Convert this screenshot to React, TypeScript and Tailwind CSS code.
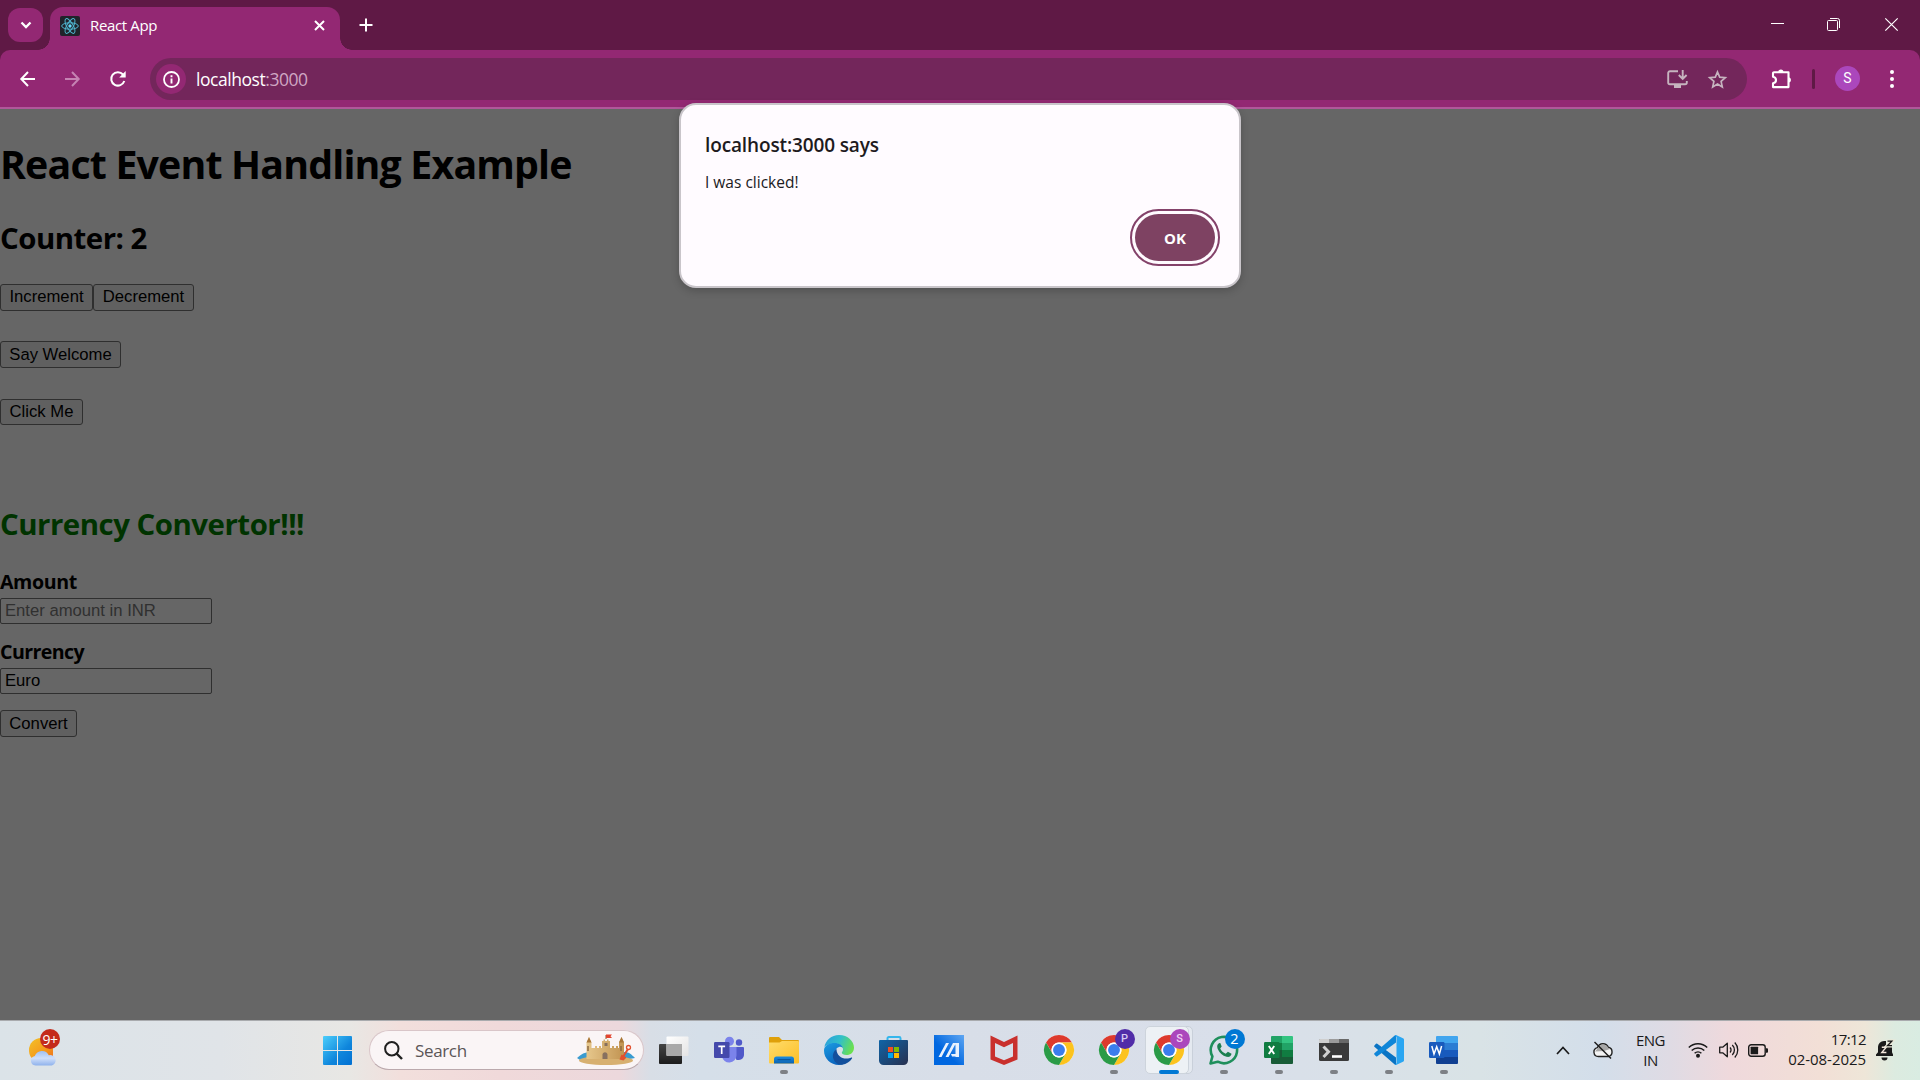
import type { ReactNode } from 'react';

function Svg({ w = 30, h = 30, box, children }: { w?: number; h?: number; box?: string; children: ReactNode }) {
  return (
    <svg width={w} height={h} viewBox={box ?? `0 0 ${w} ${h}`} fill="none" className="block shrink-0 overflow-visible">
      {children}
    </svg>
  );
}

function ReactLogo() {
  return (
    <div className="flex size-5 items-center justify-center rounded-[2px] bg-[#20232a]">
      <Svg w={18} h={18} box="-9 -9 18 18">
        <g stroke="#4fb6cf" strokeWidth="1">
          <ellipse rx="8.3" ry="3.2" />
          <ellipse rx="8.3" ry="3.2" transform="rotate(60)" />
          <ellipse rx="8.3" ry="3.2" transform="rotate(120)" />
        </g>
        <circle r="1.7" fill="#61dafb" />
      </Svg>
    </div>
  );
}

function TabStrip() {
  return (
    <div className="flex h-[50px] items-start bg-[#5f1945]">
      <div className="mt-2 ml-2 flex h-[34px] w-[35px] items-center justify-center rounded-[12px] bg-[#932873]">
        <Svg w={12} h={8}>
          <path d="M1.500 1.500 6 6l4.500-4.500" stroke="#fff" strokeWidth="2.300" />
        </Svg>
      </div>
      <div className="relative mt-[7px] ml-[7px] flex h-[43px] w-[290px] items-center rounded-t-[13px] bg-[#932873] pb-[6px]">
        <div className="absolute bottom-0 -left-3 size-3 bg-[radial-gradient(circle_at_0_0,transparent_11.500px,#932873_12px)]" />
        <div className="absolute -right-3 bottom-0 size-3 bg-[radial-gradient(circle_at_100%_0,transparent_11.500px,#932873_12px)]" />
        <div className="mt-px ml-[10px]">
          <ReactLogo />
        </div>
        <span className="ml-[10px] flex-1 pb-px text-[15px] leading-5 tracking-[-0.35px] text-white">React App</span>
        <div className="mr-[15px] pb-px">
          <Svg w={11} h={11}>
            <path d="m1 1 9 9M10 1l-9 9" stroke="#fff" strokeWidth="2" />
          </Svg>
        </div>
      </div>
      <div className="mt-[18px] ml-[19px]">
        <Svg w={14} h={14}>
          <path d="M7 .5v13M.5 7h13" stroke="#fff" strokeWidth="2" />
        </Svg>
      </div>
      <div className="ml-auto flex h-[49px] items-center pr-[22px]">
        <Svg w={13} h={13}>
          <path d="M0 5.500h13" stroke="#fff" />
        </Svg>
        <div className="ml-[43px]">
          <Svg w={13} h={13}>
            <rect x=".5" y="2.500" width="10" height="10" rx="1" stroke="#fff" />
            <path d="M3 .5h7.500a2 2 0 0 1 2 2V10" stroke="#fff" />
          </Svg>
        </div>
        <div className="ml-[45px]">
          <Svg w={13} h={13}>
            <path d="m.3.300 12.400 12.400M12.700.3.300 12.700" stroke="#fff" strokeWidth="1.200" />
          </Svg>
        </div>
      </div>
    </div>
  );
}

function Toolbar() {
  return (
    <div className="bg-[#5f1945]">
      <div className="flex h-[59px] items-start rounded-t-[10px] border-b-2 border-[#b0589a] bg-[#932873] pt-2">
        <div className="flex h-[42px] w-[150px] items-center pb-px pl-5">
          <Svg w={15} h={16}>
            <path d="M15 8H1.500M8 1 1.300 8 8 15" stroke="#fff" strokeWidth="2" />
          </Svg>
          <div className="ml-[30px]">
            <Svg w={15} h={16}>
              <path d="M0 8h13.500M7 1l6.700 7L7 15" stroke="#c583b3" strokeWidth="2" />
            </Svg>
          </div>
          <div className="ml-[30px]">
            <Svg w={16} h={16}>
              <path d="M14.300 10A6.700 6.700 0 1 1 13 3.500l1.500 1.500" stroke="#fff" strokeWidth="2" />
              <path d="M15.700 0v6.500H9.200z" fill="#fff" />
            </Svg>
          </div>
        </div>
        <div className="flex h-[42px] w-[1597px] items-center rounded-full bg-[#73265b] pl-[6px]">
          <div className="flex size-[30px] items-center justify-center rounded-full bg-[#932873]">
            <Svg w={17} h={17}>
              <circle cx="8.500" cy="8.500" r="7.500" stroke="#fff" strokeWidth="1.800" />
              <path d="M8.500 7.500v5M8.500 4.300v2" stroke="#fff" strokeWidth="1.900" />
            </Svg>
          </div>
          <span className="ml-[10px] text-[17.5px] leading-6 tracking-[-0.45px] text-white">
            localhost<span className="text-[#cfa6c3]">:3000</span>
          </span>
          <div className="mr-[20px] ml-auto flex items-center gap-[20px]">
            <Svg w={21} h={18}>
              <path d="M11 1.200H3A1.800 1.800 0 0 0 1.200 3v9.500A1.800 1.800 0 0 0 3 14.300h15a1.800 1.800 0 0 0 1.800-1.800V11" stroke="#c6b4bf" strokeWidth="1.900" />
              <path d="M7 14h7v4H7z" fill="#c6b4bf" />
              <path d="M15.700 0v8.500M11.800 5l3.900 4 3.900-4" stroke="#c6b4bf" strokeWidth="1.900" />
            </Svg>
            <Svg w={19} h={19}>
              <path d="m9.500 2 2.200 5.200 5.600.5-4.200 3.700 1.200 5.500-4.800-2.900-4.800 2.900 1.200-5.500L1.700 7.700l5.600-.5z" stroke="#c6b4bf" strokeWidth="1.700" />
            </Svg>
          </div>
        </div>
        <div className="flex h-[42px] items-center pb-px pl-6">
          <Svg w={21} h={20}>
            <path d="M3 3.300h14.500v14.800H2V14.300c4-.6 4-6 0-6.600V4.300a1 1 0 0 1 1-1z" stroke="#fff" strokeWidth="2.100" strokeLinejoin="round" />
            <path d="M7.300 3a2.600 2.600 0 0 1 5.200 0zM18 8.300a2.700 2.700 0 0 1 0 5.200z" fill="#fff" />
          </Svg>
          <div className="ml-5 h-5 w-[3px] rounded bg-[#5f1945]" />
          <div className="ml-5 flex size-[25px] items-center justify-center rounded-full bg-[#ab47bc] font-[Roboto] text-[14px] text-white">S</div>
          <div className="ml-[30px]">
            <Svg w={4} h={18}>
              <circle cx="2" cy="2" r="2" fill="#fff" />
              <circle cx="2" cy="9" r="2" fill="#fff" />
              <circle cx="2" cy="16" r="2" fill="#fff" />
            </Svg>
          </div>
        </div>
      </div>
    </div>
  );
}

function PageButton({ className, children }: { className: string; children: ReactNode }) {
  return (
    <button
      className={`flex items-center justify-center rounded-[3px] border border-[#2f2f2f] bg-[#606060] font-['Liberation_Sans',sans-serif] text-[16.67px] leading-5 whitespace-nowrap text-black ${className}`}
    >
      {children}
    </button>
  );
}

function Page() {
  return (
    <div className="flex flex-1 flex-col items-start bg-[#666666] text-black">
      <h1 className="mt-7 text-[39.3px] leading-[54px] font-bold tracking-[-0.83px]">React Event Handling Example</h1>
      <h2 className="mt-[27px] text-[29.4px] leading-10 font-bold tracking-[-0.5px]">Counter: 2</h2>
      <div className="mt-[26px] flex">
        <PageButton className="h-[27px] w-[93px] pb-[2px]">Increment</PageButton>
        <PageButton className="h-[27px] w-[101px] pb-[2px]">Decrement</PageButton>
      </div>
      <PageButton className="mt-[30px] h-[27px] w-[121px]">Say Welcome</PageButton>
      <PageButton className="mt-[31px] h-[26px] w-[83px]">Click Me</PageButton>
      <h2 className="mt-[79px] text-[29.4px] leading-10 font-bold tracking-[-0.48px] text-[#003300]">Currency Convertor!!!</h2>
      <label className="mt-[25px] text-[19.6px] leading-[26px] font-bold tracking-[-0.4px]">Amount</label>
      <input
        placeholder="Enter amount in INR"
        className="mt-[3px] h-[26px] w-[212px] rounded-[2px] border border-[#2f2f2f] bg-[#666666] pb-px pl-1 font-['Liberation_Sans',sans-serif] text-[16.67px] placeholder:text-[#303030]"
      />
      <label className="mt-[15px] text-[19.6px] leading-[26px] font-bold tracking-[-0.6px]">Currency</label>
      <input
        defaultValue="Euro"
        className="mt-[3px] h-[26px] w-[212px] rounded-[2px] border border-[#2f2f2f] bg-[#666666] pb-px pl-1 font-['Liberation_Sans',sans-serif] text-[16.67px]"
      />
      <PageButton className="mt-4 h-[27px] w-[77px]">Convert</PageButton>
    </div>
  );
}

function AlertDialog() {
  return (
    <div className="absolute top-[103px] left-[679px] flex h-[185px] w-[562px] flex-col rounded-[17px] border-2 border-[#c9c5ca] bg-[#fffbff] pl-6 text-[#201a1d] shadow-[0_3px_8px_rgba(0,0,0,0.2)]">
      <div className="mt-[27px] text-[19px] leading-[26px] font-semibold tracking-[-0.13px]">localhost:3000 says</div>
      <div className="mt-[14px] text-[15.500px] leading-5">I was clicked!</div>
      <button className="mt-[17px] mr-[19px] flex h-[57px] w-[90px] items-center justify-center self-end rounded-[29px] border-2 border-[#84426a] p-[3px]">
        <span className="flex h-full w-full items-center justify-center rounded-[24px] bg-[#7e4262] pt-px text-[15px] font-bold text-white">OK</span>
      </button>
    </div>
  );
}

function Weather() {
  return (
    <div className="relative">
      <Svg w={27} h={28}>
        <defs>
          <linearGradient id="sun" x1="0" y1="0" x2="1" y2="1">
            <stop stopColor="#f2c229" />
            <stop offset=".6" stopColor="#f59a1c" />
            <stop offset="1" stopColor="#ec6f1c" />
          </linearGradient>
          <linearGradient id="cloud" x1="0" y1="0" x2="0" y2="1">
            <stop stopColor="#9fc0f2" />
            <stop offset=".5" stopColor="#cfdffa" />
            <stop offset="1" stopColor="#8fb2ec" />
          </linearGradient>
        </defs>
        <path d="M12 0A12 12 0 0 0 0 12c0 5 2 8 5 10h19V12A12 12 0 0 0 12 0z" fill="url(#sun)" />
        <path d="M6.500 27.500a4.800 4.800 0 0 1-.7-9.500 7.600 7.600 0 0 1 14-.8 5.200 5.200 0 0 1 3 10.300z" fill="url(#cloud)" />
      </Svg>
      <div className="absolute -top-[9px] left-[11px] flex size-5 items-center justify-center rounded-full bg-[#c42b1c] text-[14px] tracking-[-0.5px] text-white">9+</div>
    </div>
  );
}

function Castle() {
  return (
    <Svg w={60} h={32}>
      <defs>
        <linearGradient id="sand" x1="0" y1="0" x2="1" y2="0">
          <stop stopColor="#e6c78c" />
          <stop offset="1" stopColor="#c29452" />
        </linearGradient>
      </defs>
      <path d="M1 24c4-4 8-6 13-6v8H4zM59 24c-4-4-6-6-11-6v8z" fill="#3a9bd0" />
      <ellipse cx="30" cy="26.500" rx="27" ry="4.500" fill="#d7b070" />
      <path d="M30 5V1" stroke="#8a5a2a" />
      <path d="M30 .5h6l-1.500 1.700L36 4h-6z" fill="#e2452f" />
      <path d="M10.500 8.500 13 3l2.500 5.500v5.500H19V12h2v2h2v-2h2v2h1V7h1.500V5.500h1.500V7h2V5.500h1.500V7H34v7h2v-2h2v2h2v-2h2v2h1V8.500L45.500 3 48 8.500V25H10.500z" fill="url(#sand)" />
      <path d="m10.500 8.500 2.500-5.500 2.500 5.500zM43 8.500 45.500 3 48 8.500z" fill="#a87638" />
      <path d="M26.500 25v-5a2.700 2.700 0 0 1 5 0v5zM28.500 9h3v3h-3z" fill="#87705f" />
      <path d="M12 12v5M45 12v5" stroke="#8d6a43" strokeWidth="1.500" />
      <path d="m47 23 5-8" stroke="#e2512f" strokeWidth="2" />
      <circle cx="52.500" cy="13.500" r="2" stroke="#e2512f" strokeWidth="1.300" />
      <path d="m43.500 25.500 2-5 5 3-3 3z" fill="#e2512f" />
    </Svg>
  );
}

function Chrome() {
  return (
    <Svg box="-24 -24 48 48">
      <circle r="24" fill="#fff" />
      <path d="M-20.785-12A24 24 0 0 1 20.785-12H0A12 12 0 0 0-10.392 6z" fill="#dd3a2d" />
      <path d="M20.785-12A24 24 0 0 1 0 24L10.392 6A12 12 0 0 0 0-12z" fill="#fcc31e" />
      <path d="M-20.785-12A24 24 0 0 0 0 24L10.392 6A12 12 0 0 1-10.392 6z" fill="#2a9b47" />
      <circle r="12" fill="#fff" />
      <circle r="9.500" fill="#3b7ded" />
    </Svg>
  );
}

function ChromeProfile({ letter, tone }: { letter: string; tone: string }) {
  return (
    <div className="relative">
      <Chrome />
      <div className={`absolute -top-[6px] left-[16px] flex size-5 items-center justify-center rounded-full font-[Roboto] text-[11px] font-medium ${tone}`}>{letter}</div>
    </div>
  );
}

function StartLogo() {
  return (
    <Svg w={29} h={29}>
      <defs>
        <linearGradient id="win" x1="0" y1="0" x2="29" y2="29" gradientUnits="userSpaceOnUse">
          <stop stopColor="#4ccefb" />
          <stop offset=".6" stopColor="#0f86dc" />
          <stop offset="1" stopColor="#0270d2" />
        </linearGradient>
      </defs>
      <path d="M1 0h13v14H0V1a1 1 0 0 1 1-1zM15 0h13a1 1 0 0 1 1 1v13H15zM0 15h14v14H1a1 1 0 0 1-1-1zM15 15h14v13a1 1 0 0 1-1 1H15z" fill="url(#win)" />
    </Svg>
  );
}

function TaskView() {
  return (
    <Svg>
      <defs>
        <linearGradient id="tv" x1="0" y1="0" x2="0" y2="1">
          <stop stopColor="#444" />
          <stop offset="1" stopColor="#1c1c1c" />
        </linearGradient>
        <linearGradient id="tv2" x1="0" y1="0" x2="1" y2="1">
          <stop stopColor="#fff" />
          <stop offset="1" stopColor="#e4e4e4" />
        </linearGradient>
      </defs>
      <rect x="0" y="9" width="23" height="20" rx="1" fill="url(#tv)" />
      <rect x="7.500" y="1.500" width="22" height="19.500" rx="1" fill="url(#tv2)" />
      <path d="M7.500 9H23v12H8.500a1 1 0 0 1-1-1z" fill="#a9a9a9" />
    </Svg>
  );
}

function Teams() {
  return (
    <Svg>
      <circle cx="25" cy="7.500" r="3.200" fill="#5059c9" />
      <path d="M20 12h9a1 1 0 0 1 1 1v6.500a5.500 5.500 0 0 1-8 5z" fill="#5059c9" />
      <circle cx="15.500" cy="6.200" r="4.500" fill="#7b83eb" />
      <path d="M8 12h14.500v8.500a7.300 7.300 0 0 1-14.500 1z" fill="#7b83eb" />
      <rect y="7" width="15.500" height="16" rx="1.200" fill="#4449ab" />
      <path d="M4.300 11.300h6.800M7.700 11.300v7.700" stroke="#fff" strokeWidth="1.700" />
    </Svg>
  );
}

function Explorer() {
  return (
    <Svg>
      <defs>
        <linearGradient id="fold" x1="0" y1="0" x2="1" y2="1">
          <stop stopColor="#ffdc6b" />
          <stop offset="1" stopColor="#fcbf27" />
        </linearGradient>
        <linearGradient id="foldb" x1="0" y1="0" x2="0" y2="1">
          <stop stopColor="#1a8ce0" />
          <stop offset="1" stopColor="#0c62b0" />
        </linearGradient>
      </defs>
      <path d="M1 2h9l3 3h16a1 1 0 0 1 1 1v4H0V3a1 1 0 0 1 1-1z" fill="#dfa00a" />
      <path d="M0 7.500h10.500L13 6h16a1 1 0 0 1 1 1v20.500a1 1 0 0 1-1 1H1a1 1 0 0 1-1-1z" fill="url(#fold)" />
      <path d="M5 28.500V24a2.500 2.500 0 0 1 2.500-2.500h15A2.500 2.500 0 0 1 25 24v4.500z" fill="url(#foldb)" />
      <path d="M8.500 24.700h13" stroke="#0a4f93" />
    </Svg>
  );
}

function Edge() {
  return (
    <Svg>
      <defs>
        <linearGradient id="e1" x1="0" y1=".2" x2="1" y2=".5">
          <stop stopColor="#2a9fdc" />
          <stop offset=".5" stopColor="#31bfca" />
          <stop offset="1" stopColor="#6be04f" />
        </linearGradient>
        <linearGradient id="e2" x1="0" y1="0" x2=".5" y2="1">
          <stop stopColor="#1b9de2" />
          <stop offset="1" stopColor="#0a63bd" />
        </linearGradient>
      </defs>
      <path d="M.3 12.500C1.500 5 7.500 0 15 0c9 0 15 6.500 15 12.500 0 5-3.500 7.500-7.500 7.500-3 0-4.700-1-4.700-2.200 0-.8 1.200-1.200 1.200-3.500 0-3-3-5.800-7.500-5.800C6 8.500 1.500 10 .3 12.500z" fill="url(#e1)" />
      <path d="M0 15.500C0 10.500 5 8 10.500 8c5 0 8 2.500 8.300 5-1-1-2.500-1.500-3.800-1-3 1-4.500 4-3.500 8 1.200 5 5 8 9.500 8.300A15 15 0 0 1 15 30C6.500 30 0 23.500 0 15.500z" fill="url(#e2)" />
      <path d="M12.500 14c-3 2.500-4.500 6-3 10 1.300 3.500 4.500 5.800 8.500 5.800 4.500-.8 8-3.300 10-6.300.4-.7-.2-1.200-.8-.9-1.200.6-2.500 1-4.700 1C17 23.600 12.500 20 12.500 14z" fill="#124f9c" />
    </Svg>
  );
}

function Store() {
  return (
    <Svg>
      <defs>
        <linearGradient id="st" x1="0" y1="0" x2="1" y2="1">
          <stop stopColor="#0f65a8" />
          <stop offset="1" stopColor="#28304f" />
        </linearGradient>
      </defs>
      <path d="M8.500 6V3.300A1.300 1.300 0 0 1 9.800 2h10.400a1.300 1.300 0 0 1 1.300 1.300V6" stroke="#35b6ec" strokeWidth="2" />
      <path d="M1 5h27a1 1 0 0 1 1 1v19.500A4.500 4.500 0 0 1 24.500 30h-20A4.500 4.500 0 0 1 0 25.500V6a1 1 0 0 1 1-1z" fill="url(#st)" />
      <path d="M9 12h5v5H9z" fill="#f25022" />
      <path d="M15 12h5v5h-5z" fill="#7fba00" />
      <path d="M9 18h5v5H9z" fill="#00a4ef" />
      <path d="M15 18h5v5h-5z" fill="#ffb900" />
    </Svg>
  );
}

function MyAsus() {
  return (
    <Svg>
      <defs>
        <linearGradient id="as" x1=".4" y1=".6" x2="1" y2="0">
          <stop stopColor="#0067e0" />
          <stop offset="1" stopColor="#5fa6f2" />
        </linearGradient>
      </defs>
      <path d="M0 0h30v30H0z" fill="url(#as)" />
      <path d="M4.500 22 12 8h3L7.500 22zM11.500 22 19 8h3L14.500 22zM21 8h4v14h-3.500V11z" fill="#e9f2fd" />
      <path d="M17 19h5v2.500h-4z" fill="#e9f2fd" />
    </Svg>
  );
}

function McAfee() {
  return (
    <Svg>
      <path d="M1.500.5 15 7 28.500.5v24L15 30 1.500 24.500zM6 8v13.500l9 3.800 9-3.800V8l-9 4.300z" fill="#c9302d" fillRule="evenodd" />
    </Svg>
  );
}

function WhatsApp() {
  return (
    <div className="relative">
      <Svg>
        <path d="M1.500 28.500 3.400 21.500A13.200 13.200 0 1 1 8.700 26.700z" stroke="#1f8f5c" strokeWidth="2.600" strokeLinejoin="round" />
        <path d="M10.500 8c-2.500 1-2.800 3.500-1.500 6.500 1.600 3.500 4.500 6.300 8.500 7.300 2.700.6 4.800-.5 5-3l-3.600-2-2.200 2c-2.500-1-4.300-2.700-5.500-5.200l1.500-2-1.400-3.600z" fill="#1b7f50" />
      </Svg>
      <div className="absolute -top-[6px] left-[16px] flex size-5 items-center justify-center rounded-full bg-[#0078d4] text-[14.500px] text-white">2</div>
    </div>
  );
}

function Excel() {
  return (
    <Svg>
      <path d="M7 2a1 1 0 0 1 1-1h10v7H7z" fill="#21a366" />
      <path d="M18 1h10a1 1 0 0 1 1 1v6H18z" fill="#33c481" />
      <path d="M7 8h11v7H7z" fill="#107c41" />
      <path d="M18 8h11v7H18z" fill="#21a366" />
      <path d="M7 15h22v7H7z" fill="#185c37" />
      <path d="M18 15h11v7H18z" fill="#107c41" />
      <path d="M7 22h22v6a1 1 0 0 1-1 1H8a1 1 0 0 1-1-1z" fill="#185c37" />
      <rect y="7" width="15.500" height="16" rx="1.200" fill="#107c41" />
      <path d="m4.800 11 5.400 8M10.200 11l-5.400 8" stroke="#fff" strokeWidth="1.900" />
    </Svg>
  );
}

function Terminal() {
  return (
    <Svg>
      <rect y="4" width="30" height="22" rx="1.500" fill="#3a3a3a" />
      <path d="M1 4h9v4H0V5a1 1 0 0 1 1-1z" fill="#cfcfcf" />
      <path d="M10 4h10v4H10z" fill="#9b9b9b" />
      <path d="M20 4h9a1 1 0 0 1 1 1v3H20z" fill="#686868" />
      <path d="m4.500 11.500 5 5.200-5 5.300" stroke="#cfcfcf" strokeWidth="3" />
      <path d="M13 21.500h10" stroke="#fff" strokeWidth="2.600" />
    </Svg>
  );
}

function VsCode() {
  return (
    <Svg>
      <path d="M.4 10.400 2 8.700a1 1 0 0 1 1.300 0L22 22.500V30a2 2 0 0 1-1.300-.6L.4 11.800a1 1 0 0 1 0-1.400z" fill="#0a74c4" />
      <path d="M.4 19.600 2 21.300a1 1 0 0 0 1.300 0L22 7.500V0a2 2 0 0 0-1.300.6L.4 18.200a1 1 0 0 0 0 1.400z" fill="#0f86d8" />
      <path d="M22 0 29 3.200a1.600 1.600 0 0 1 1 1.400v20.800a1.600 1.600 0 0 1-1 1.400L22 30a1.800 1.800 0 0 1-1-.8l1.500-1V2L21 .8z" fill="#2aa6f2" />
    </Svg>
  );
}

function Word() {
  return (
    <Svg>
      <path d="M7 8V2a1 1 0 0 1 1-1h20a1 1 0 0 1 1 1v6z" fill="#41a5ee" />
      <path d="M7 8h22v7H7z" fill="#2b7cd3" />
      <path d="M7 15h22v7H7z" fill="#185abd" />
      <path d="M7 22h22v6a1 1 0 0 1-1 1H8a1 1 0 0 1-1-1z" fill="#103f91" />
      <rect y="7" width="15.500" height="16" rx="1.200" fill="#185abd" />
      <path d="m2.800 11 2.200 8 2.700-7.300 2.700 7.300 2.200-8" stroke="#fff" strokeWidth="1.500" />
    </Svg>
  );
}

function Task({ running, active, children }: { running?: boolean; active?: boolean; children: ReactNode }) {
  return (
    <div className="relative flex h-[60px] w-[55px] items-center justify-center">
      {active && (
        <>
          <div className="absolute top-[6px] left-[8px] h-12 w-[44px] rounded-[5px] border border-[#c9d0da] bg-[#e4e9f0]" />
          <div className="absolute top-[6px] left-[3.500px] h-12 w-[44px] rounded-[5px] border border-[#cdd4dc] bg-[#edf1f5]" />
        </>
      )}
      <div className="relative">{children}</div>
      {running && <div className="absolute top-[50px] h-1 w-2 rounded-full bg-[#7d8085]" />}
      {active && <div className="absolute top-[50px] h-1 w-5 rounded-full bg-[#0078d4]" />}
    </div>
  );
}

function Tray() {
  return (
    <div className="ml-auto flex h-[60px] items-center pr-[26px] text-[#1a1a1a]">
      <Svg w={14} h={9}>
        <path d="m1 8 6-6.500L13 8" stroke="#1a1a1a" strokeWidth="1.700" />
      </Svg>
      <div className="ml-[23px]">
        <Svg w={20} h={17}>
          <path d="M5.500 14.500a4.500 4.500 0 0 1-1-8.900 5.800 5.800 0 0 1 10.800-.3 4.700 4.700 0 0 1 0 9.200z" fill="#f4f4f4" stroke="#222" strokeWidth="1.400" />
          <path d="M5 6a5.500 5.500 0 0 1 10-.5L17 7l-6 2-9 .5z" fill="#a8a8a8" />
          <path d="M1.500 0 18 16.500" stroke="#1a1a1a" strokeWidth="1.500" />
        </Svg>
      </div>
      <div className="ml-[20px] w-[35px] text-center text-[15px] leading-5 tracking-[-0.5px]">
        ENG
        <br />
        IN
      </div>
      <div className="ml-[20px]">
        <Svg w={20} h={16}>
          <path d="M.8 5.500a13 13 0 0 1 18.400 0M3.700 8.500a9 9 0 0 1 12.600 0M6.600 11.300a5 5 0 0 1 6.800 0" stroke="#1a1a1a" strokeWidth="1.500" />
          <circle cx="10" cy="13.700" r="2" fill="#1a1a1a" />
        </Svg>
      </div>
      <div className="ml-[11px]">
        <Svg w={20} h={18}>
          <path d="M.7 6.200h3l4.600-4v13.600l-4.600-4h-3z" stroke="#1a1a1a" strokeWidth="1.300" strokeLinejoin="round" />
          <path d="M11 6.500a3.500 3.500 0 0 1 0 5M13.300 4a7 7 0 0 1 0 10M15.800 1.500a11 11 0 0 1 0 15" stroke="#1a1a1a" strokeWidth="1.300" />
        </Svg>
      </div>
      <div className="ml-[9px]">
        <Svg w={20} h={13}>
          <rect x=".7" y=".8" width="16.500" height="11.400" rx="2.500" stroke="#1a1a1a" strokeWidth="1.400" />
          <rect x="2.600" y="2.800" width="7.500" height="7.400" rx=".5" fill="#1a1a1a" />
          <path d="M18 4.300h1a1 1 0 0 1 1 1v2.400a1 1 0 0 1-1 1h-1z" fill="#1a1a1a" />
        </Svg>
      </div>
      <div className="ml-[20px] w-[78px] pb-[2px] text-right text-[15px] leading-5 tracking-[-0.05px] whitespace-nowrap">
        <span className="tracking-[-0.6px]">17:12</span>
        <br />
        02-08-2025
      </div>
      <div className="ml-[10px] pr-px">
        <Svg w={17} h={20}>
          <path d="M0 16v-1.500l2-2.300V7a6 6 0 0 1 6-6h2v4h6v7.200l1 2.300V16z" fill="#1a1a1a" />
          <path d="M5.500 17.500h6a3 3 0 0 1-6 0z" fill="#1a1a1a" />
          <path d="M5.800 7.200h4.400l-4.400 5.300h4.600" stroke="#f3e6dc" strokeWidth="1.400" />
          <path d="M11.500 1.200h4.300l-4.300 4.500H16" stroke="#e9e7d8" strokeWidth="3.600" />
          <path d="M11.500 1.200h4.300l-4.300 4.500H16" stroke="#1a1a1a" strokeWidth="1.300" />
        </Svg>
      </div>
    </div>
  );
}

function Taskbar() {
  return (
    <div className="flex h-[60px] shrink-0 bg-[linear-gradient(90deg,#dbe3e8_0px,#e0e4e8_220px,#e8e7e4_350px,#f2dfdc_400px,#f0d9da_500px,#ecd8dc_620px,#d8dee6_650px,#d5dfe9_700px,#d8dee8_960px,#d9dfea_1240px,#d9e3e6_1480px,#d3deea_1600px,#dfdbe4_1670px,#efd9dc_1730px,#f2dfd6_1820px,#eee6d8_1865px,#dcebe0_1895px,#d9ece2_1920px)] shadow-[inset_0_1px_0_#a9abae]">
      <div className="w-[323px] pt-[18px] pl-[29px]">
        <Weather />
      </div>
      <div className="pt-4">
        <StartLogo />
      </div>
      <div className="mt-[10px] ml-[17px] flex h-10 w-[275px] items-center rounded-full border border-[#d9c6c9] border-b-[#bba9ad] bg-[#faf5f6]">
        <div className="ml-[14px]">
          <Svg w={19} h={19}>
            <circle cx="7.800" cy="7.800" r="6.700" stroke="#1f1f1f" strokeWidth="2" />
            <path d="m12.500 12.500 5.500 5.500" stroke="#1f1f1f" strokeWidth="2.400" />
          </Svg>
        </div>
        <span className="ml-[12px] flex-1 pt-[2px] text-[17px] tracking-[-0.35px] text-[#5a5557]">Search</span>
        <div className="mr-[7px]">
          <Castle />
        </div>
      </div>
      <div className="ml-[2px] flex">
        <Task><TaskView /></Task>
        <Task><Teams /></Task>
        <Task running><Explorer /></Task>
        <Task><Edge /></Task>
        <Task><Store /></Task>
        <Task><MyAsus /></Task>
        <Task><McAfee /></Task>
        <Task><Chrome /></Task>
        <Task running><ChromeProfile letter="P" tone="bg-[#512da8] text-[#d8c9f2]" /></Task>
        <Task active><ChromeProfile letter="S" tone="bg-[#ab47bc] text-[#f0d5f5]" /></Task>
        <Task running><WhatsApp /></Task>
        <Task running><Excel /></Task>
        <Task running><Terminal /></Task>
        <Task running><VsCode /></Task>
        <Task running><Word /></Task>
      </div>
      <Tray />
    </div>
  );
}

export default function App() {
  return (
    <div className="relative flex h-[1080px] w-[1920px] flex-col overflow-hidden font-['Open_Sans','Noto_Sans',sans-serif]">
      <TabStrip />
      <Toolbar />
      <Page />
      <Taskbar />
      <AlertDialog />
    </div>
  );
}
